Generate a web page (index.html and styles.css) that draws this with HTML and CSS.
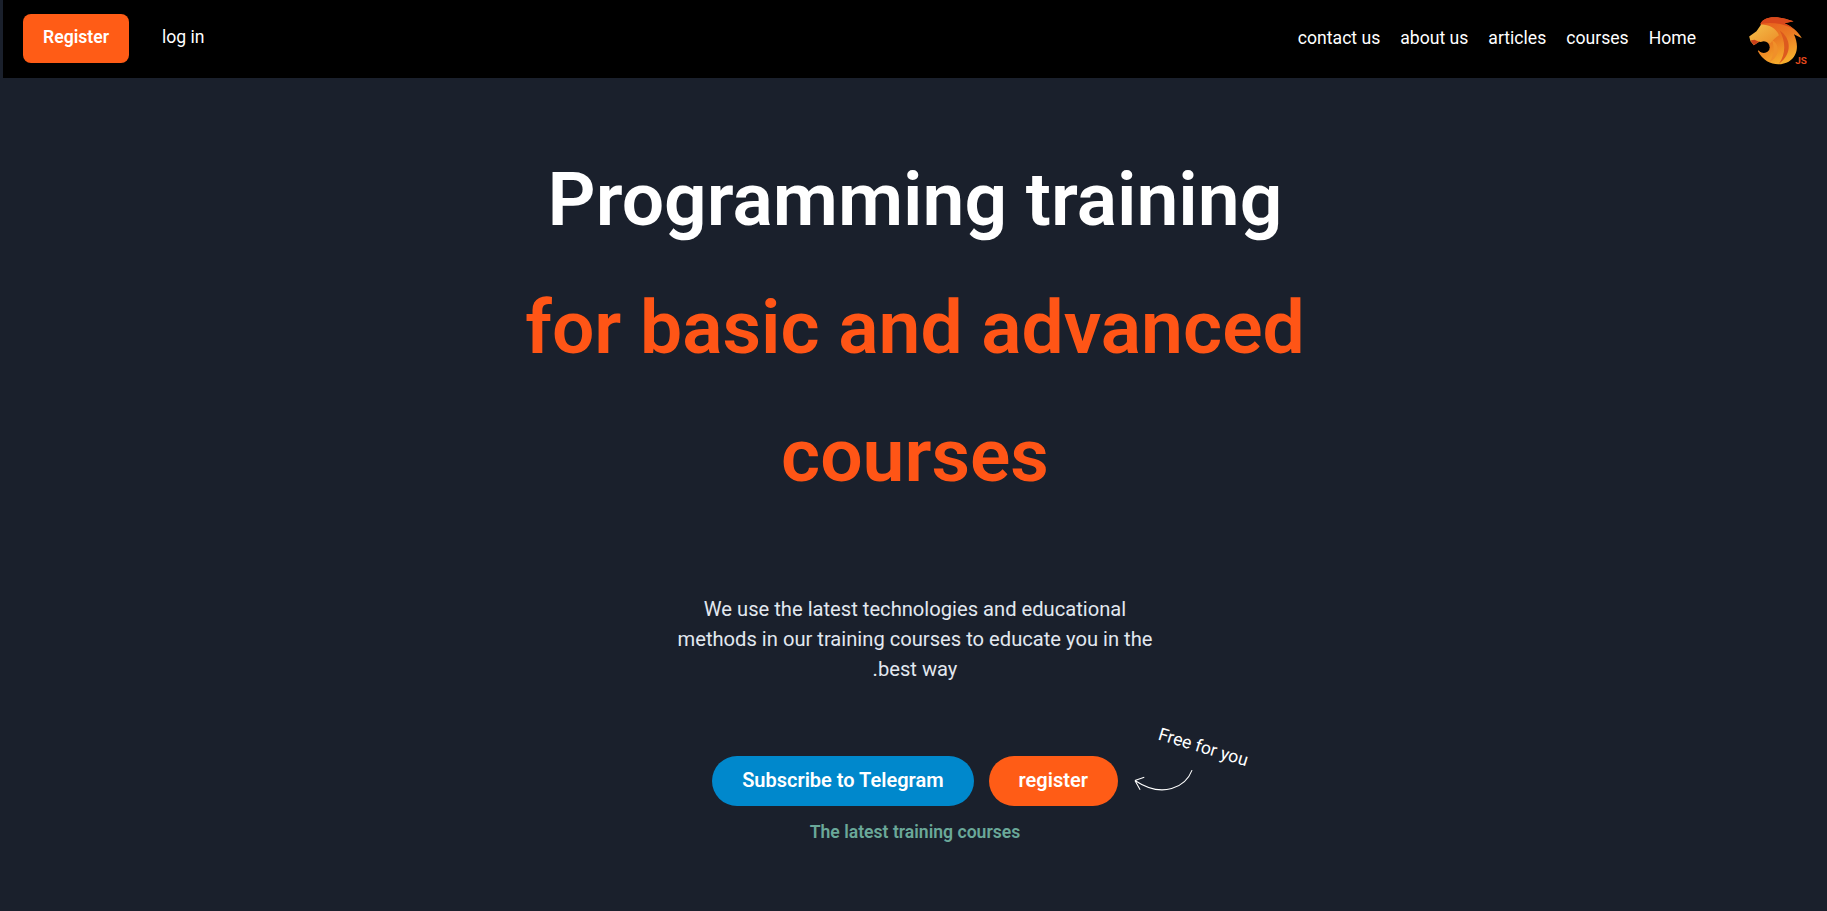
FILE: index.html
```html
<!DOCTYPE html>
<html lang="en">
<head>
    <meta charset="UTF-8">
    <title>Programming training</title>
    <link rel="stylesheet" href="styles.css">
</head>
<body>
    <!-- top bar -->
    <header class="navbar">
        <div class="nav-left">
            <a class="nav-register" href="#">Register</a>
            <a class="nav-login" href="#">log in</a>
        </div>
        <div class="nav-right">
            <nav class="nav-links">
                <a href="#">contact us</a>
                <a href="#">about us</a>
                <a href="#">articles</a>
                <a href="#">courses</a>
                <a href="#">Home</a>
            </nav>
            <svg class="logo" viewBox="140 40 180 160" width="60" height="53">
                <defs>
                    <linearGradient id="lion" x1="0" y1="0" x2="0.4" y2="1">
                        <stop offset="0" stop-color="#e8541c"/>
                        <stop offset="0.55" stop-color="#ea7a22"/>
                        <stop offset="1" stop-color="#f6ab2c"/>
                    </linearGradient>
                    <linearGradient id="face" x1="0" y1="0" x2="1" y2="1">
                        <stop offset="0" stop-color="#f4c04a"/>
                        <stop offset="1" stop-color="#ec8a26"/>
                    </linearGradient>
                </defs>
                <!-- mane -->
                <path d="M180 70 C190 48 225 42 280 62 L252 68 C274 76 294 94 305 113 L281 101 C296 132 294 166 265 184 C240 198 194 196 172 152 L210 120 L190 90 Z" fill="url(#lion)"/>
                <path d="M180 70 C190 48 225 42 280 62 L252 68 C262 72 272 78 280 86 C255 70 215 62 180 70 Z" fill="#d9481c"/>
                <path d="M238 90 C272 112 278 160 236 190 C258 160 256 122 238 90 Z" fill="#dd5a1e"/>
                <path d="M214 118 C240 132 240 168 206 186 C222 166 224 140 214 118 Z" fill="#f0902a"/>
                <!-- face -->
                <path d="M146 108 L168 92 L182 72 C206 72 228 84 236 104 C224 112 216 120 210 128 L176 124 L160 134 L150 122 Z" fill="url(#face)"/>
                <path d="M150 120 L162 118 L176 124 L160 134 Z" fill="#c8401a"/>
                <circle cx="190" cy="140" r="18" fill="#000"/>
                <text class="logo-js" x="285" y="192">JS</text>
            </svg>
        </div>
    </header>

    <!-- hero -->
    <main class="hero">
        <h1 class="hero-title">
            Programming training
            <span class="accent">for basic and advanced courses</span>
        </h1>
        <p class="hero-text">We use the latest technologies and educational methods in our training courses to educate you in the best way.</p>
        <div class="hero-actions">
            <a class="btn btn-blue" href="#">Subscribe to Telegram</a>
            <a class="btn btn-orange" href="#">register</a>
            <div class="free-note">
                <span class="free-text">Free for you</span>
                <svg class="free-arrow" viewBox="0 0 62 26" width="66" height="27">
                    <path d="M58 2 C52 18 30 30 3 12 M3 12 L12 9 M3 12 L8 21" fill="none" stroke="#fff" stroke-width="1"/>
                </svg>
            </div>
        </div>
        <a class="latest" href="#">The latest training courses</a>
    </main>
</body>
</html>
```

FILE: styles.css
```css
* {
    box-sizing: border-box;
}
html, body {
    height: 100%;
}
body {
    margin: 0;
    padding-left: 3px;
    height: 911px;
    overflow: hidden;
    background: #1a202c;
    font-family: Roboto, sans-serif;
    color: #fff;
}
a {
    color: inherit;
    text-decoration: none;
}
.navbar {
    display: flex;
    justify-content: space-between;
    align-items: center;
    height: 78px;
    padding: 0 20px;
    background: #000;
}
.nav-left {
    display: flex;
    align-items: center;
    gap: 33px;
    margin-bottom: 1px;
}
.nav-register {
    display: block;
    width: 106px;
    padding: 13px 0 16px;
    border-radius: 8px;
    background: #ff5c16;
    font-size: 17.6px;
    font-weight: 600;
    line-height: 20px;
    text-align: center;
}
.nav-login {
    font-size: 17.6px;
    margin-bottom: 4px;
}
.nav-right {
    display: flex;
    align-items: center;
    gap: 51px;
}
.nav-links {
    display: flex;
    gap: 20px;
    font-size: 17.6px;
    margin-bottom: 2px;
}
.logo {
    display: block;
    margin-top: 2px;
}
.logo-js {
    font-family: Roboto, sans-serif;
    font-size: 30px;
    font-weight: 700;
    fill: #e0481c;
}
.hero {
    display: flex;
    flex-direction: column;
    align-items: center;
    padding-top: 57px;
}
.hero-title {
    width: 900px;
    margin: 0;
    font-size: 75px;
    font-weight: 600;
    line-height: 128px;
    text-align: center;
}
.accent {
    display: block;
    color: #ff5516;
}
.hero-text {
    direction: rtl;
    width: 484px;
    margin: 75px 0 0;
    font-size: 20.16px;
    line-height: 30px;
    text-align: center;
    color: #e2e8f0;
}
.hero-actions {
    position: relative;
    display: flex;
    gap: 15px;
    margin-top: 72px;
}
.btn {
    display: block;
    height: 50px;
    padding: 0 30px;
    border-radius: 25px;
    font-size: 20px;
    font-weight: 600;
    line-height: 48px;
}
.btn-blue {
    background: #0088cc;
}
.btn-orange {
    background: #ff5c16;
}
.free-note {
    position: absolute;
    left: 100%;
    top: -32px;
    width: 130px;
    height: 90px;
}
.free-text {
    position: absolute;
    left: 39px;
    top: 13px;
    font-size: 17.6px;
    white-space: nowrap;
    transform: rotate(17deg);
}
.free-arrow {
    position: absolute;
    left: 13px;
    top: 44px;
}
.latest {
    margin-top: 16px;
    font-size: 17.6px;
    font-weight: 600;
    color: #6aa899;
}
```
